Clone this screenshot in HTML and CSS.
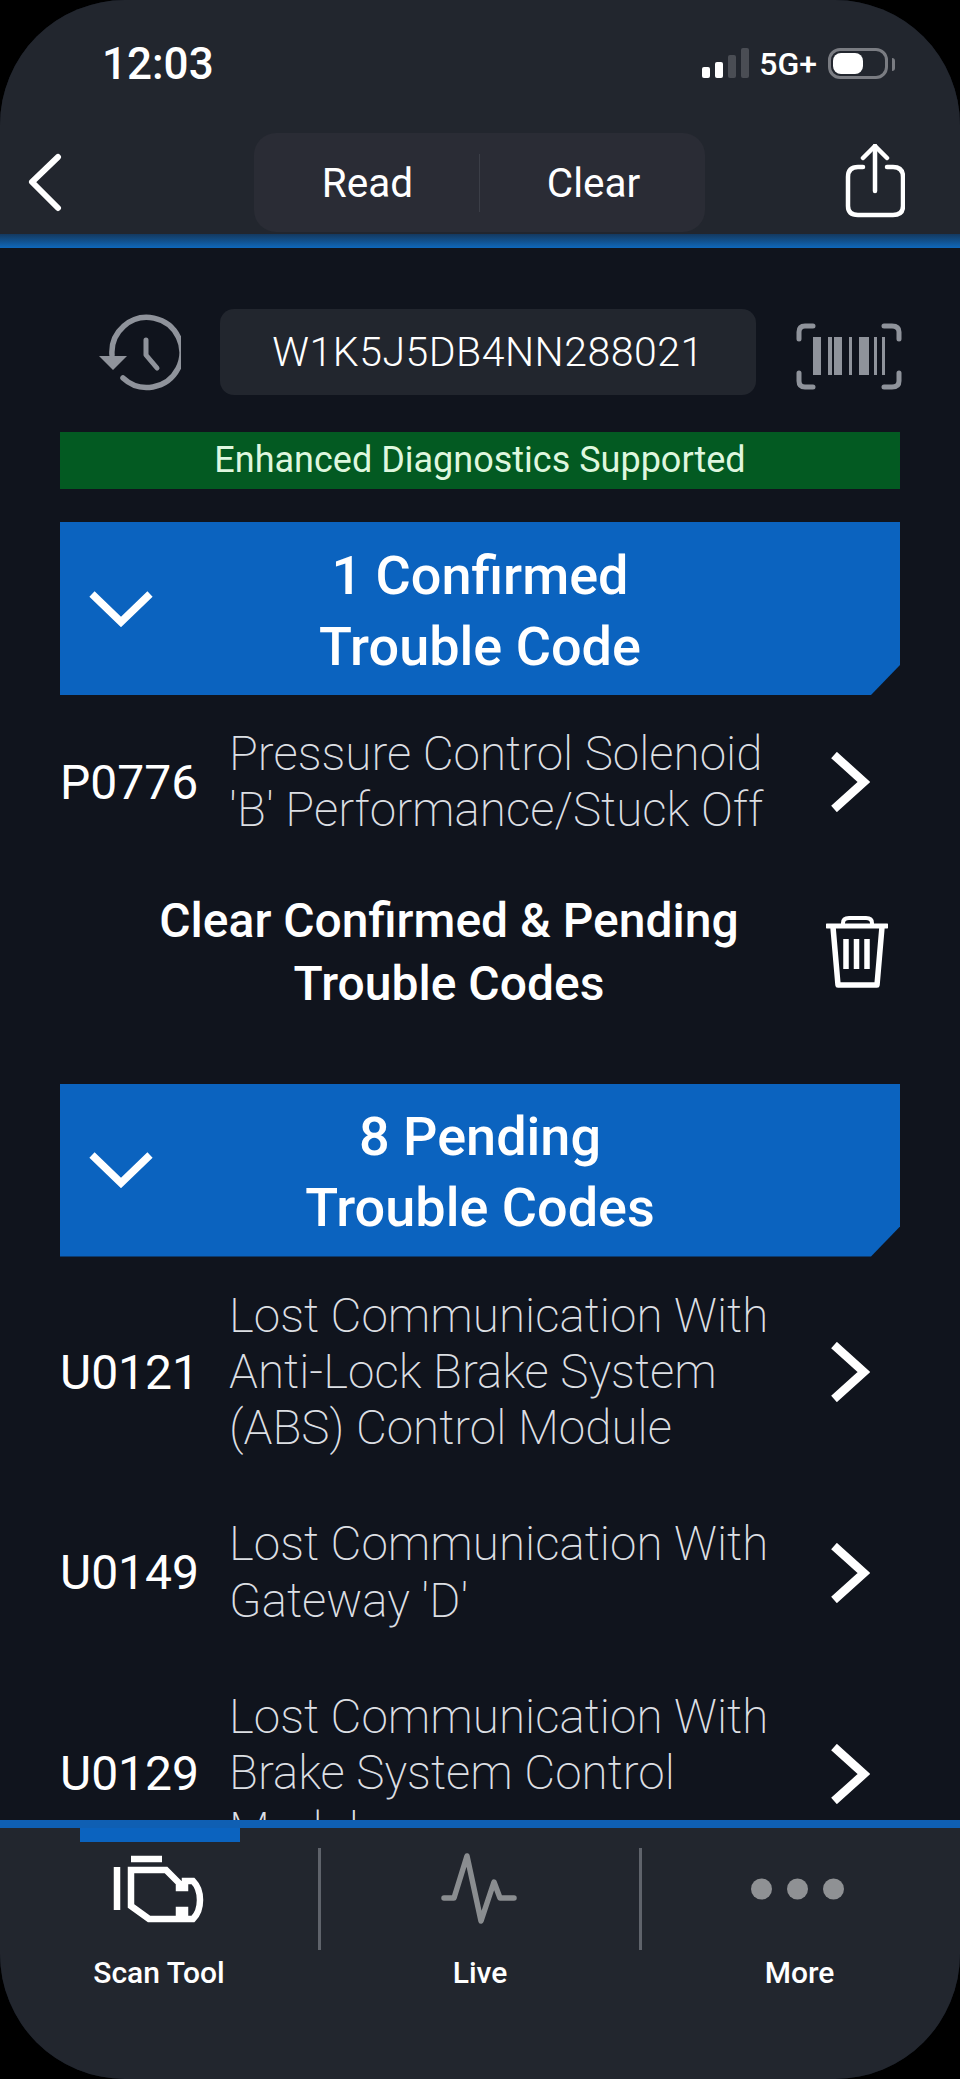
FILE: index.html
```html
<!DOCTYPE html>
<html lang="en">
<head>
  <meta charset="UTF-8" />
  <meta name="viewport" content="width=device-width, initial-scale=1.0"/>
  <title>Scan Tool</title>
  <link rel="stylesheet" href="styles.css">
</head>
<body>

  <div class="phone">
    <header class="top">
      <div class="status">
        <span class="time">12:03</span>
        <div class="status-right">
          <div class="signal">
            <span class="bar bar-1"></span>
            <span class="bar bar-2"></span>
            <span class="bar bar-3"></span>
            <span class="bar bar-4"></span>
          </div>
          <span class="network">5G+</span>
          <div class="battery"><span class="battery-level"></span></div>
          <span class="battery-nub"></span>
        </div>
      </div>

      <nav class="nav">
        <svg class="back" viewBox="0 0 40 60" fill="none" stroke="#fff" stroke-width="6" stroke-linecap="round" stroke-linejoin="round">
          <path d="M32 4 L6 29 L32 55"/>
        </svg>
        <div class="pill">
          <span class="pill-item">Read</span>
          <span class="pill-line"></span>
          <span class="pill-item">Clear</span>
        </div>
        <svg class="share" viewBox="0 0 60 74" fill="none" stroke="#fff" stroke-width="4.5" stroke-linecap="round" stroke-linejoin="round">
          <path d="M18 23 H13 Q3 23 3 33 V62 Q3 71 13 71 H48 Q58 71 58 62 V33 Q58 23 48 23 H42"/>
          <path d="M30 2 V47"/>
          <path d="M18 14 L30 2 L42 14"/>
        </svg>
      </nav>
    </header>
    <div class="top-line"></div>

    <main class="content">
      <div class="vin-row">
        <svg class="history" viewBox="0 0 100 100" fill="none" stroke="#8f939b" stroke-width="5.5" stroke-linecap="round" stroke-linejoin="round">
          <path d="M31 54 A35 35 0 1 1 42 77"/>
          <path d="M18 55 H46 L32 69 Z" fill="#8f939b" stroke="none"/>
          <path d="M65 39 V54 L76 67" stroke-width="5"/>
        </svg>
        <div class="vin">W1K5J5DB4NN288021</div>
        <svg class="barcode" viewBox="0 0 140 100" fill="none" stroke="#8f939b" stroke-width="5" stroke-linecap="round">
          <path d="M33 24 H25 Q19 24 19 30 V37"/>
          <path d="M104 24 H112 Q119 24 119 30 V37"/>
          <path d="M19 71 V79 Q19 85 25 85 H33"/>
          <path d="M119 71 V79 Q119 85 112 85 H104"/>
          <g fill="#8f939b" stroke="none">
            <rect x="33" y="35" width="8" height="38"/>
            <rect x="48" y="35" width="4" height="38"/>
            <rect x="54" y="35" width="8" height="38"/>
            <rect x="69" y="35" width="3" height="38"/>
            <rect x="79" y="35" width="10" height="38"/>
            <rect x="94" y="35" width="3" height="38"/>
            <rect x="102" y="35" width="3" height="38"/>
          </g>
        </svg>
      </div>

      <div class="enhanced">Enhanced Diagnostics Supported</div>

      <section>
        <div class="section-head">
          <svg class="caret" viewBox="0 0 64 36" fill="none" stroke="#fff" stroke-width="7.5">
            <path d="M3 3 L32 31 L61 3"/>
          </svg>
          <h2>1 Confirmed<br>Trouble Code</h2>
        </div>

        <div class="code-row">
          <span class="code">P0776</span>
          <p class="desc">Pressure Control Solenoid<br>'B' Performance/Stuck Off</p>
          <svg class="arrow" viewBox="0 0 40 60" fill="none" stroke="#fff" stroke-width="8.5"><path d="M4 3 L34 30 L4 57"/></svg>
        </div>

        <div class="clear-row">
          <p class="clear-text">Clear Confirmed &amp; Pending<br>Trouble Codes</p>
          <svg class="trash" viewBox="0 0 62 74" fill="none" stroke="#fff" stroke-linejoin="round">
            <path d="M1 11 H61" stroke-width="5" stroke-linecap="round"/>
            <path d="M17 10 V8 Q17 3 23 3 H40 Q46 3 46 8 V10" stroke-width="4"/>
            <path d="M7 12 L12 70 H51 L56 12" stroke-width="5.5"/>
            <path d="M20 24 V54 M30.5 24 V54 M41 24 V54" stroke-width="5.5"/>
          </svg>
        </div>
      </section>

      <section>
        <div class="section-head">
          <svg class="caret" viewBox="0 0 64 36" fill="none" stroke="#fff" stroke-width="7.5">
            <path d="M3 3 L32 31 L61 3"/>
          </svg>
          <h2>8 Pending<br>Trouble Codes</h2>
        </div>

        <div class="code-row">
          <span class="code">U0121</span>
          <p class="desc">Lost Communication With<br>Anti-Lock Brake System<br>(ABS) Control Module</p>
          <svg class="arrow" viewBox="0 0 40 60" fill="none" stroke="#fff" stroke-width="8.5"><path d="M4 3 L34 30 L4 57"/></svg>
        </div>
        <div class="code-row">
          <span class="code">U0149</span>
          <p class="desc">Lost Communication With<br>Gateway 'D'</p>
          <svg class="arrow" viewBox="0 0 40 60" fill="none" stroke="#fff" stroke-width="8.5"><path d="M4 3 L34 30 L4 57"/></svg>
        </div>
        <div class="code-row">
          <span class="code">U0129</span>
          <p class="desc">Lost Communication With<br>Brake System Control<br>Module</p>
          <svg class="arrow" viewBox="0 0 40 60" fill="none" stroke="#fff" stroke-width="8.5"><path d="M4 3 L34 30 L4 57"/></svg>
        </div>
      </section>
    </main>

    <footer class="tabs">
      <div class="tab active">
        <svg class="tab-icon" viewBox="0 28 160 102" fill="none" stroke="#fff" stroke-width="6.5">
          <path d="M38 47 V90" />
          <path d="M52 39 H83" />
          <path d="M52 50 H87 L100 63 V68 H106 V61 H114 Q121 68 121 80 Q121 92 114 99 H106 V90 H100 V99 H70 L52 86 Z"/>
        </svg>
        <span class="tab-label">Scan Tool</span>
      </div>
      <span class="tab-line"></span>
      <div class="tab">
        <svg class="tab-icon" viewBox="-20 28 160 102" fill="none" stroke="#8a8d90" stroke-width="5.5" stroke-linecap="round" stroke-linejoin="round">
          <path d="M24 78 H34 L47 36 L61 101 L74 62 L80 78 H94"/>
        </svg>
        <span class="tab-label">Live</span>
      </div>
      <span class="tab-line"></span>
      <div class="tab tab-last">
        <svg class="tab-icon" viewBox="-1.5 0 160 102" fill="#8f9194">
          <circle cx="40" cy="41" r="10.5"/>
          <circle cx="76" cy="41" r="10.5"/>
          <circle cx="112" cy="41" r="10.5"/>
        </svg>
        <span class="tab-label">More</span>
      </div>
    </footer>
  </div>

</body>
</html>
```

FILE: styles.css
```css
* {
  box-sizing: border-box;
}

body {
  margin: 0;
  background: #000;
  font-family: Roboto, 'Liberation Sans', sans-serif;
  color: #fff;
}

.phone {
  width: 960px;
  height: 2079px;
  display: flex;
  flex-direction: column;
  overflow: hidden;
  background: #10141d;
  border-radius: 125px;
}

/* top bar */
.top {
  height: 234px;
  background: #22262e;
  flex-shrink: 0;
}

.top-line {
  height: 14px;
  flex-shrink: 0;
  background: linear-gradient(#14395f, #0f68bb);
}

.status {
  height: 133px;
  padding: 39px 0 0 102px;
  display: flex;
  justify-content: space-between;
  align-items: flex-start;
}

.time {
  font-size: 44px;
  font-weight: 500;
  line-height: 50px;
}

.status-right {
  display: flex;
  align-items: flex-start;
  padding: 9px 65px 0 0;
}

.signal {
  display: flex;
  align-items: flex-end;
  gap: 5px;
  height: 30px;
  margin-right: 10px;
}

.bar {
  width: 8px;
  border-radius: 2px;
  background: #fff;
}

.bar-1 { height: 11px; }
.bar-2 { height: 16px; }
.bar-3 { height: 23px; background: #4a4d54; }
.bar-4 { height: 30px; background: #4a4d54; }

.network {
  font-size: 32px;
  font-weight: 500;
  line-height: 32px;
  margin-right: 11px;
}

.battery {
  width: 60px;
  height: 31px;
  padding: 2px;
  border: 3px solid #7a7c82;
  border-radius: 12px;
}

.battery-level {
  display: block;
  width: 30px;
  height: 21px;
  background: #fff;
  border-radius: 8px;
}

.battery-nub {
  width: 3px;
  height: 13px;
  margin: 10px 0 0 4px;
  background: #7a7c82;
  border-radius: 0 3px 3px 0;
}

.nav {
  display: flex;
  align-items: flex-start;
  padding-left: 26px;
}

.back {
  width: 40px;
  height: 60px;
  margin: 20px 188px 0 0;
}

.pill {
  width: 451px;
  height: 99px;
  display: flex;
  align-items: center;
  background: #2a2c35;
  border-radius: 22px;
}

.pill-item {
  flex: 1;
  padding-left: 2px;
  text-align: center;
  font-size: 40.5px;
}

.pill-line {
  width: 1px;
  height: 58px;
  background: #3b3e47;
}

.share {
  width: 60px;
  height: 74px;
  margin: 11px 0 0 140px;
}

/* main list */
.content {
  flex: 1;
  min-height: 0;
  overflow: hidden;
  padding: 61px 60px 0;
}

.vin-row {
  display: flex;
  align-items: center;
  height: 86px;
}

.history {
  width: 100px;
  height: 100px;
  flex-shrink: 0;
  margin: -2px 39px 0 21px;
}

.vin {
  width: 536px;
  height: 86px;
  flex-shrink: 0;
  line-height: 86px;
  text-align: center;
  font-size: 41px;
  font-weight: 300;
  letter-spacing: 0.5px;
  background: #22262e;
  border-radius: 14px;
}

.barcode {
  width: 140px;
  height: 100px;
  flex-shrink: 0;
  margin-left: 24px;
}

.enhanced {
  height: 57px;
  margin-top: 37px;
  line-height: 57px;
  text-align: center;
  font-size: 36px;
  color: #dff7df;
  background: #035a22;
}

.section-head {
  display: grid;
  grid-template-columns: 1fr auto 1fr;
  align-items: center;
  height: 173px;
  margin-top: 33px;
  padding-top: 4px;
  background: #0b63bf;
  clip-path: polygon(0 0, 100% 0, 100% 143px, 811px 100%, 0 100%);
}

section + section .section-head {
  margin-top: 0;
}

.caret {
  width: 64px;
  height: 36px;
  margin: -4px 0 0 29px;
}

.section-head h2 {
  margin: 0;
  text-align: center;
  font-size: 54px;
  font-weight: 500;
  line-height: 71px;
}

.code-row {
  display: flex;
  align-items: center;
  margin-top: 31px;
  margin-bottom: 60px;
}

.section-head + .code-row ~ .code-row {
  margin-top: 0;
}

.code {
  width: 169px;
  flex-shrink: 0;
  font-size: 48px;
}

.desc {
  flex: 1;
  margin: 0;
  font-size: 47.6px;
  font-weight: 200;
  line-height: 56.3px;
  color: #dcdfe3;
}

.arrow {
  width: 40px;
  height: 60px;
  flex-shrink: 0;
  margin-right: 30px;
}

.clear-row {
  display: flex;
  align-items: center;
  margin-top: -10px;
  margin-bottom: 69px;
  padding-left: 12px;
}

.clear-text {
  flex: 1;
  margin: 0;
  text-align: center;
  font-size: 48px;
  font-weight: 500;
  line-height: 63px;
}

.trash {
  width: 62px;
  height: 74px;
  margin: 0 12px 0 0;
  flex-shrink: 0;
}

/* bottom tabs */
.tabs {
  position: relative;
  flex-shrink: 0;
  height: 259px;
  display: grid;
  grid-template-columns: 1fr 3px 1fr 3px 1fr;
  align-items: start;
  padding-top: 20px;
  background: #22262e;
  border-top: 8px solid #0f5fb3;
}

.tab {
  display: flex;
  flex-direction: column;
  align-items: center;
}

.tab-last {
  padding-right: 3px;
}

.tab.active::before {
  content: "";
  position: absolute;
  top: 0;
  left: 80px;
  width: 160px;
  height: 14px;
  background: #0b63bf;
}

.tab-icon {
  width: 160px;
  height: 102px;
}

.tab-label {
  margin-top: 6px;
  font-size: 30px;
  font-weight: 500;
  line-height: 34px;
}

.tab-line {
  height: 102px;
  background: #5f636b;
}
```
